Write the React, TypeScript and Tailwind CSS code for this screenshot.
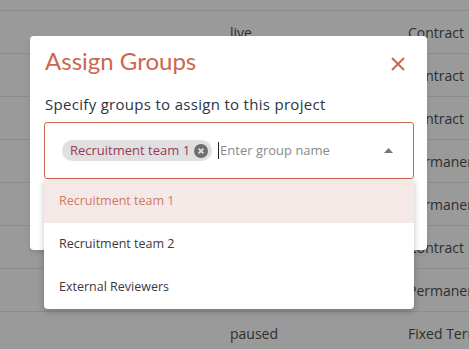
const rows = [
  { status: "live", type: "Contract" },
  { status: "", type: "Contract" },
  { status: "", type: "Contract" },
  { status: "", type: "Permanent" },
  { status: "", type: "Permanent" },
  { status: "", type: "Contract" },
  { status: "", type: "Permanent" },
  { status: "paused", type: "Fixed Term" },
];

const options = ["Recruitment team 1", "Recruitment team 2", "External Reviewers"];

export default function App() {
  return (
    <div
      className="relative w-[469px] h-[349px] overflow-hidden bg-[#9a9a9a]"
      style={{ fontFamily: '"Open Sans", sans-serif' }}
    >
      {/* table behind the overlay */}
      <div className="flex flex-col">
        <div className="h-[11px] border-b border-[#8c8c8c]" />
        {rows.map((r, i) => (
          <div
            key={i}
            className="h-[43px] flex items-center border-b border-[#8c8c8c] text-[14px] text-[#2e2e2e]"
          >
            <div className="w-[230px] shrink-0" />
            <div className="w-[178px] shrink-0">{r.status}</div>
            <div className="whitespace-nowrap">{r.type}</div>
          </div>
        ))}
      </div>

      {/* modal */}
      <div className="absolute left-[30px] top-[36px] w-[397px] h-[214px] bg-white rounded-[4px] shadow-md">
        <div className="flex items-start justify-between pl-[15px] pr-[22px] pt-[10px]">
          <h2
            className="text-[24px] text-[#c9684f] leading-[30px]"
            style={{ fontFamily: "Lato, sans-serif" }}
          >
            Assign Groups
          </h2>
          <svg width="14" height="14" viewBox="0 0 14 14" className="mt-[11px]">
            <path d="M1 1L13 13M13 1L1 13" stroke="#c9684f" strokeWidth="2" />
          </svg>
        </div>
        <p className="pl-[15px] mt-[18px] text-[15px] leading-[20px] tracking-[0.3px] text-[#2d3342]">
          Specify groups to assign to this project
        </p>
      </div>

      {/* select, drawn above the modal so its menu can overflow */}
      <div className="absolute left-[44px] top-[122px] w-[370px]">
        <div className="h-[57px] border border-[#c9684f] rounded-[3px] bg-white flex items-center pl-[17px] pr-[20px]">
          <div className="flex items-center h-[21px] rounded-full bg-[#e0e0e0] pl-[8px] pr-[4px] gap-[4px]">
            <span className="text-[13px] text-[#9b3a55] whitespace-nowrap">Recruitment team 1</span>
            <svg width="14" height="14" viewBox="0 0 14 14">
              <circle cx="7" cy="7" r="7" fill="#6e6e6e" />
              <path d="M4.6 4.6L9.4 9.4M9.4 4.6L4.6 9.4" stroke="#e0e0e0" strokeWidth="1.8" />
            </svg>
          </div>
          <div className="ml-[6px] w-px h-[17px] bg-[#222]" />
          <span className="ml-px flex-1 text-[13px] text-[#8a8a8a]">Enter group name</span>
          <svg width="9" height="5" viewBox="0 0 9 5">
            <path d="M0 5L4.5 0L9 5Z" fill="#777" />
          </svg>
        </div>
        <div className="mt-px bg-white rounded-b-[4px] shadow-[0_2px_6px_rgba(0,0,0,0.25)] overflow-hidden">
          {options.map((o, i) => (
            <div
              key={o}
              className={
                i === 0
                  ? "h-[43px] flex items-center pl-[15px] bg-[#f5e9e7] text-[12.5px] text-[#d07a66]"
                  : "h-[43px] flex items-center pl-[15px] text-[12.5px] text-[#3a3a3a]"
              }
            >
              {o}
            </div>
          ))}
        </div>
      </div>
    </div>
  );
}
